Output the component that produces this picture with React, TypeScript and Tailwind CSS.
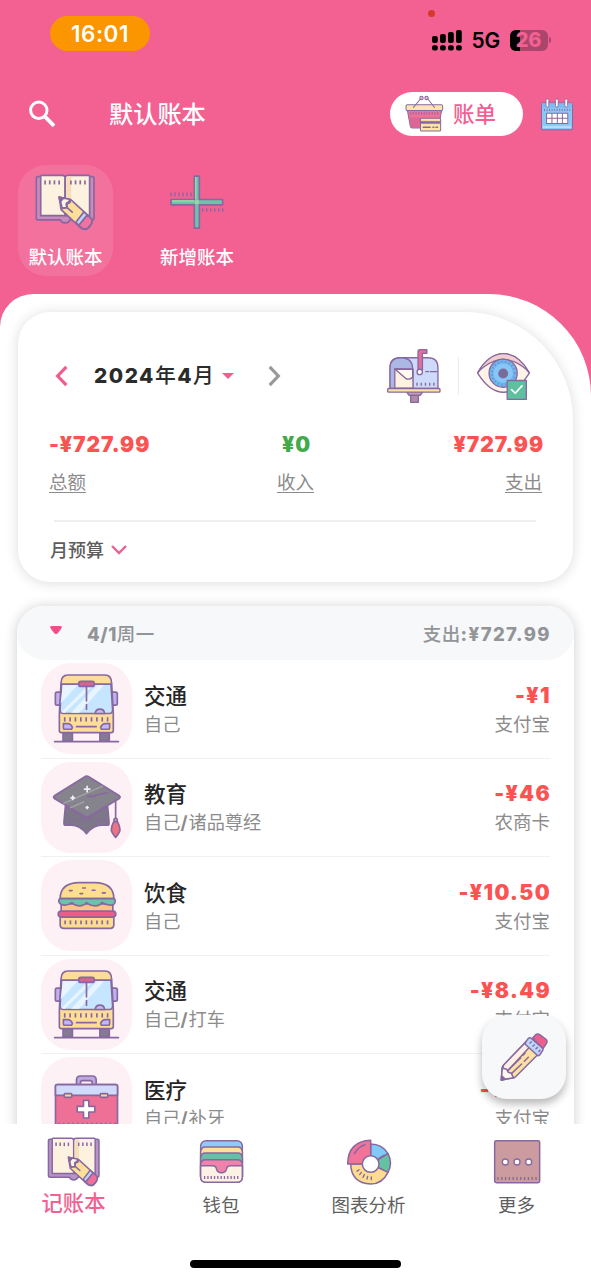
import React from "react";

const P = "#8868a0";

type IconProps = { className?: string };

function Ticks({ x, y, n, gap, len = 12, w = 5, color = P }: { x: number; y: number; n: number; gap: number; len?: number; w?: number; color?: string }) {
  return (
    <g stroke={color} strokeWidth={w} strokeLinecap="butt">
      {Array.from({ length: n }, (_, i) => (
        <path key={i} d={`M${x + i * gap} ${y}v${len}`} />
      ))}
    </g>
  );
}

function BookIcon({ className, eraser = "#ee6f9c", cover = "#b693c6" }: IconProps & { eraser?: string; cover?: string }) {
  return (
    <svg viewBox="104 523 182 170" className={className} fill="none" stroke={P} strokeWidth="5" strokeLinejoin="round" strokeLinecap="round">
      <path d="M121 531h-8q-5 0-5 5v119q0 5 5 5h67q3 9 14 9t14-9h67q5 0 5-5V536q0-5-5-5h-8z" fill={cover} />
      <path d="M121 530q0-3 3-3h62q8 0 8 8v112H121z" fill="#fdf1df" />
      <path d="M267 530q0-3-3-3h-62q-8 0-8 8v112h73z" fill="#fdf1df" />
      <path d="M197 536q0-6 7-6h8v75l-15-12z" fill="#f6deb9" stroke="none" />
      <Ticks x={134} y={542} n={4} gap={14} />
      <Ticks x={211} y={542} n={4} gap={14} />
      <path d="M176 592l34 7 60 55q8 9 0 22l-7 9q-10 7-21 0l-60-56z" fill="#fce09a" />
      <path d="M177 593l29 5 3 10-12 5 2 10-14 2z" fill="#fff5e8" />
      <path d="M176 592l13 3-10 11z" fill={P} />
      <path d="M198 622l17 15M210 602l-12 8 2 12-13 4" />
      <path d="M250 636l-24 31 9 9 25-31z" fill="#b9d5fa" />
      <path d="M260 645l-25 31 7 7q12 8 21 0l8-10q7-11-1-19z" fill={eraser} />
    </svg>
  );
}

function PlusIcon({ className }: IconProps) {
  return (
    <svg viewBox="508 522 168 168" className={className} fill="none" stroke={P} strokeWidth="5" strokeLinejoin="round">
      <path d="M584 527h15v70h70v16h-70v70h-15v-70h-70v-16h70z" fill="#6bc5ad" />
      <path d="M586 599h11v11h-11zM517 599h66v5h-66zM586 530h4v66h-4z" fill="#9ad9a5" stroke="none" />
      <Ticks x={514} y={576} n={6} gap={12} len={11} w={4} />
      <Ticks x={609} y={623} n={6} gap={12} len={11} w={4} />
    </svg>
  );
}

function BasketIcon({ className }: IconProps) {
  return (
    <svg viewBox="106 283 116 110" className={className} fill="none" stroke={P} strokeWidth="3" strokeLinejoin="round" strokeLinecap="round">
      <path d="M113 328l9 49q1 4 5 4h74q4 0 5-4l9-49z" fill="#ee7199" />
      <path d="M118 350l5 26q1 4 5 4h24v-30z" fill="#dd6695" stroke="none" />
      <rect x="109" y="312" width="109" height="17" rx="4" fill="#fce5b4" />
      <path d="M131 320l21-25M194 320l-20-25" />
      <circle cx="155" cy="292" r="5" fill="#e9b8c8" />
      <circle cx="170" cy="292" r="5" fill="#e9b8c8" />
      <Ticks x={123} y={334} n={11} gap={8} len={7} w={3} />
      <rect x="152" y="352" width="60" height="38" rx="3" fill="#fce5a2" />
      <path d="M153 361h58v7h-58z" fill={P} strokeWidth="1" />
      <path d="M160 379h21M189 379h3M198 379h5" strokeWidth="4" />
    </svg>
  );
}

function CalendarIcon({ className }: IconProps) {
  return (
    <svg viewBox="511 291 100 98" className={className} fill="none" stroke={P} strokeWidth="3" strokeLinejoin="round">
      <rect x="515" y="306" width="92" height="79" rx="4" fill="#8dc8f4" />
      <path d="M516 307h90v13h-90z" fill="#7ebcf0" stroke="none" />
      <path d="M519 377h84" stroke="#b5defa" strokeWidth="6" />
      <Ticks x={524} y={323} n={11} gap={7.5} len={7} w={2.5} />
      {[532, 560, 588].map((x) => (
        <rect key={x} x={x - 3.5} y="294" width="8" height="24" rx="4" fill="#fff" strokeWidth="2.5" />
      ))}
      <rect x="530" y="336" width="63" height="31" fill="#fff" />
      <path d="M546 336v31M562 336v31M577 336v31M530 351h63" />
    </svg>
  );
}

function MailboxIcon({ className }: IconProps) {
  return (
    <svg viewBox="168 203 166 166" className={className} fill="none" stroke={P} strokeWidth="4" strokeLinejoin="round" strokeLinecap="round">
      <path d="M241 333h23v31h-23z" fill="#b18aa5" />
      <path d="M229 333h48l-7 10h-34z" fill="#c7a0b4" />
      <path d="M210 232h83q29 0 29 30v61H180v-61q0-30 30-30z" fill="#cddaf9" />
      <path d="M180 323v-61q0-30 32-30 35 0 35 34v57z" fill="#abb8e5" />
      <path d="M194 264l54 2v56h-54z" fill="#fef1df" />
      <path d="M195 266l31 27q9 6 21-3v-24z" fill="#fff9f0" />
      <rect x="173" y="323" width="155" height="11" rx="3" fill="#fce3aa" />
      <path d="M263 268v-55q0-5 5-5h21v11h-13v49z" fill="#e56d9b" />
      <circle cx="268" cy="274" r="8" fill="#fff" />
      <path d="M286 273h9M300 273h19" />
      <Ticks x={260} y={306} n={5} gap={12.5} len={9} w={4} />
    </svg>
  );
}

function EyeIcon({ className }: IconProps) {
  return (
    <svg viewBox="440 215 164 146" className={className} fill="none" stroke={P} strokeWidth="4" strokeLinejoin="round" strokeLinecap="round">
      <path d="M445 278q35-58 77-58t77 58q-35 57-77 57t-77-57z" fill="#fef3e6" />
      <path d="M445 276q33-56 77-56t77 56q-6-8-20-18-30-21-57-21t-57 21q-14 10-20 18z" fill="#f2cfcf" />
      <circle cx="521" cy="278" r="42" fill="#6db7f0" />
      <circle cx="521" cy="278" r="29" fill="#86c7f8" stroke="none" />
      <circle cx="521" cy="278" r="34" strokeDasharray="3 8" strokeWidth="6" strokeLinecap="butt" opacity=".7" />
      <circle cx="521" cy="279" r="13" fill="#746d98" />
      <rect x="533" y="300" width="57" height="56" fill="#5fc0a0" />
      <path d="M546 327l11 11 20-22" stroke="#fff" strokeWidth="5" />
    </svg>
  );
}

function BusIcon({ className }: IconProps) {
  return (
    <svg viewBox="160 235 200 212" className={className} fill="none" stroke={P} strokeWidth="5" strokeLinejoin="round" strokeLinecap="round">
      <path d="M190 413h28v25h-28zM300 413h28v25h-28z" fill="#857b91" />
      <rect x="167" y="292" width="18" height="39" rx="5" fill="#c0b2ec" />
      <rect x="334" y="292" width="18" height="39" rx="5" fill="#c0b2ec" />
      <path d="M205 241h110q20 0 20 25l5 90v51q0 6-6 6H185q-6 0-6-6v-51l5-90q0-25 21-25z" fill="#fddd98" />
      <path d="M186 268h147l5 77q0 11-10 11H191q-10 0-10-11z" fill="#c6e6ff" />
      <path d="M189 271h45l-51 54zM184 352l83-81h14l-85 83zM214 354l78-83h21l-75 83z" fill="#e8f5ff" stroke="none" />
      <rect x="237" y="260" width="46" height="15" rx="6" fill="#d9658f" />
      <path d="M260 275v43M260 329v14M165 440h190M230 395h59" />
      <path d="M286 356q1-13 14-13t14 13z" fill="#c3bdf0" />
      <Ticks x={195} y={367} n={9} gap={16} len={13} w={5} />
      <path d="M191 386h12q11 0 15 12l-3 5h-20q-4 0-4-4zM329 386h-12q-11 0-15 12l3 5h20q4 0 4-4z" fill="#c1b9f3" />
    </svg>
  );
}

function CapIcon({ className }: IconProps) {
  return (
    <svg viewBox="153 538 212 194" className={className} fill="none" stroke={P} strokeWidth="5" strokeLinejoin="round" strokeLinecap="round">
      <path d="M196 634l-4 44q-1 13 2 13h20q24 0 45 25 21-25 45-25h20q3 0 2-13l-4-44-63 34z" fill="#7d7887" />
      <Ticks x={208} y={668} n={10} gap={12} len={12} w={4} />
      <path d="M259 544q4 0 8 3l90 56q5 4 0 8l-91 54q-6 4-12 0l-91-54q-5-4 0-8l90-56q3-3 6-3z" fill="#85848d" />
      <path d="M191 626l116-52M211 639l40-18" stroke="#a3a2a7" strokeWidth="4" />
      <path d="M261 605h23M283 602l39-8M346 619v50" />
      <path d="M261 575v16M253 583h16M218 604v10M213 609h10M261 635v6M258 638h6" stroke="#f0edf4" />
      <circle cx="346" cy="675" r="5" fill="#c9a2c3" />
      <path d="M340 681h12q7 14 7 24-1 9-13 22-12-13-13-22 0-10 7-24z" fill="#ed7283" />
    </svg>
  );
}

function BurgerIcon({ className }: IconProps) {
  return (
    <svg viewBox="167 93 186 148" className={className} fill="none" stroke={P} strokeWidth="5" strokeLinejoin="round" strokeLinecap="round">
      <path d="M179 201h162v25q0 10-11 10H190q-11 0-11-10z" fill="#fddc92" />
      <path d="M182 162h156v24H182z" fill="#fdc18e" />
      <rect x="173" y="184" width="174" height="18" rx="9" fill="#e75f8a" />
      <path d="M179 146q0-47 58-48h46q58 1 58 48z" fill="#fdde91" />
      <path d="M180 146h160q6 0 5 10-2 10-14 10-15 0-26-8-6 10-20 10-17 0-26-10-8 10-23 10-13 0-22-10-11 9-23 8-13-1-16-10-1-10 5-10z" fill="#6bc4aa" />
      <path d="M207 122h8M239 131h8M247 114h8M276 121h8M307 129h8" />
      <Ticks x={194} y={212} n={9} gap={16} len={12} w={5} />
    </svg>
  );
}

function KitIcon({ className }: IconProps) {
  return (
    <svg viewBox="160 672 200 180" className={className} fill="none" stroke={P} strokeWidth="5" strokeLinejoin="round" strokeLinecap="round">
      <path d="M230 705v-15q0-12 12-12h35q12 0 12 12v15h-12v-8q0-5-6-5h-23q-6 0-6 5v8z" fill="#bda9dd" />
      <rect x="167" y="704" width="186" height="142" rx="5" fill="#ef7096" />
      <path d="M172 704h176q5 0 5 5v27H167v-27q0-5 5-5z" fill="#cfdbf8" />
      <rect x="193" y="731" width="23" height="11" rx="3" fill="#fbd780" />
      <rect x="301" y="731" width="23" height="11" rx="3" fill="#fbd780" />
      <path d="M251 751h16v18h18v17h-18v18h-16v-18h-19v-17h19z" fill="#fff" />
      <Ticks x={178} y={818} n={13} gap={14} len={12} />
    </svg>
  );
}

function PencilIcon({ className }: IconProps) {
  return (
    <svg viewBox="72 82 150 150" className={className} fill="none" stroke={P} strokeWidth="4.5" strokeLinejoin="round" strokeLinecap="round">
      <path d="M152 112l39 35-70 70q-3 3-8 3l-34 6 2-34q0-5 3-9z" fill="#fde1a3" />
      <path d="M152 113l14 12-68 73-15-7 3-10z" fill="#fff0e5" />
      <path d="M82 190l13 4 5 9 9 3 6 13-36 7z" fill="#fff8ee" />
      <path d="M79 226l1-13 11 11z" fill={P} />
      <path d="M150 146l-6 6M137 160l-37 36M160 158l-12 12M140 178l-30 28" />
      <path d="M173 100l8-9q6-5 13-1l18 13q7 6 2 14l-10 15z" fill="#ed5f8f" />
      <path d="M160 101q5-4 9 0l33 29q4 4 1 8l-9 13q-4 4-8 0l-33-30q-5-4-1-9z" fill="#bdd4fb" />
      <path d="M165 115l4-3M174 124l4-3M183 132l4-3M192 140l3-3" />
    </svg>
  );
}

function WalletIcon({ className }: IconProps) {
  return (
    <svg viewBox="597 68 136 136" className={className} fill="none" stroke={P} strokeWidth="4.5" strokeLinejoin="round">
      <rect x="602" y="73" width="126" height="126" rx="16" fill="#94c8f8" />
      <path d="M602 107q1-15 14-15h98q13 0 14 15v75H602z" fill="#fddfa0" />
      <path d="M602 125q1-15 14-15h98q13 0 14 15v57H602z" fill="#69bea5" />
      <path d="M602 146q1-15 14-15h98q13 0 14 15v36H602z" fill="#f281ab" />
      <path d="M602 149h37q8 0 10 7 3 14 16 14t16-14q2-7 10-7h37v34q0 16-16 16h-94q-16 0-16-16z" fill="#fdf1e3" />
      <Ticks x={614} y={180} n={11} gap={10} len={9} w={4} />
    </svg>
  );
}

function ChartIcon({ className }: IconProps) {
  return (
    <svg viewBox="137 68 138 138" className={className} fill="none" stroke={P} strokeWidth="4.5" strokeLinejoin="round" strokeLinecap="round">
      <path d="M211 143V83q34 0 52 29z" fill="#7fcaf9" />
      <path d="M211 143l52-31q15 28 0 56z" fill="#64c1a1" />
      <path d="M211 143l52 25q-17 35-52 35-58-2-60-60z" fill="#fddc90" />
      <path d="M211 143h-69q1-68 69-71z" fill="#f27399" />
      <path d="M162 112q12-21 32-27M238 125l13-8" />
      <circle cx="211" cy="143" r="25" fill="#fff" />
      <g strokeWidth="4">
        <path d="M170 165l6-5M178 175l5-7M188 183l4-8M200 188l2-8M213 190v-8" />
      </g>
    </svg>
  );
}

function MoreIcon({ className }: IconProps) {
  return (
    <svg viewBox="579 69 144 135" className={className} fill="none" stroke={P} strokeWidth="4.5">
      <rect x="584" y="74" width="135" height="126" rx="5" fill="#cb9b9f" />
      {[616, 651, 686].map((x) => (
        <circle key={x} cx={x} cy="138" r="9" fill="#fff" strokeWidth="4" />
      ))}
      <Ticks x={594} y={183} n={11} gap={11.4} len={9} w={4} />
    </svg>
  );
}

function Chevron({ className, d }: { className: string; d: string }) {
  return (
    <svg viewBox="0 0 24 24" className={className} fill="none" stroke="currentColor" strokeWidth="3">
      <path d={d} />
    </svg>
  );
}

const rows = [
  { icon: <BusIcon className="h-[71px] w-[67px]" />, name: "交通", note: ["自己"], amount: "-¥1", account: "支付宝" },
  { icon: <CapIcon className="mt-[-1px] h-[65px] w-[71px]" />, name: "教育", note: ["自己", "诸品尊经"], amount: "-¥46", account: "农商卡" },
  { icon: <BurgerIcon className="h-[49px] w-[62px]" />, name: "饮食", note: ["自己"], amount: "-¥10.50", account: "支付宝" },
  { icon: <BusIcon className="h-[71px] w-[67px]" />, name: "交通", note: ["自己", "打车"], amount: "-¥8.49", account: "支付宝" },
  { icon: <KitIcon className="mt-[3px] h-[60px] w-[67px]" />, name: "医疗", note: ["自己", "补牙"], amount: "-¥662", account: "支付宝" },
];

function StatusBar() {
  return (
    <div className="flex h-[68px] shrink-0 justify-between pl-[50px] pr-[40px] pt-4">
      <div className="flex h-[35px] w-[100px] items-center justify-center rounded-full bg-[#fb9500] pt-[2px] text-[22.5px] font-semibold leading-none tracking-[0.5px] text-white">16:01</div>
      <div className="relative flex h-[26px] items-center pt-[22px]">
        <i className="absolute left-[-4px] top-[-6px] size-[7px] rounded-full bg-[#d43a27]" />
        <svg viewBox="0 0 31 21" className="h-[21px] w-[31px]">
          {[0, 1, 2, 3].map((i) => (
            <g key={i}>
              <rect x={i * 8} y={6 - i * 2} width="5.8" height={7 + i * 2} rx="2" />
              <rect x={i * 8} y="15.2" width="5.8" height="5.3" rx="2" />
            </g>
          ))}
        </svg>
        <span className="ml-[9px] w-[29px] text-[21px] font-semibold leading-none tracking-[-0.2px] text-black">5G</span>
        <div className="relative ml-[9px] flex h-[21px] w-[38px] items-center justify-center overflow-hidden rounded-[6px] bg-[#ac456c]">
          <i className="absolute inset-y-0 left-0 w-[10px] bg-black" />
          <span className="relative text-[20px] font-extrabold leading-none tracking-[-0.3px] text-[#f26192]">26</span>
        </div>
        <i className="ml-[1.5px] h-[6px] w-[2px] rounded-r-full bg-[#ac456c]" />
      </div>
    </div>
  );
}

export default function App() {
  return (
    <div className="relative flex h-[1280px] w-full flex-col overflow-hidden bg-[#f26192] font-['Inter','Noto_Sans_CJK_SC',sans-serif] text-[#2b2b2b]">
      <StatusBar />

      <header className="flex h-[92px] shrink-0 items-center pl-[28px] pr-[17px] text-white">
        <svg viewBox="0 0 28 28" className="size-[28px]" fill="none" stroke="currentColor" strokeWidth="3">
          <circle cx="10.8" cy="10.3" r="8.2" />
          <path d="M16.5 16.2L26 25.8" strokeWidth="3.8" />
        </svg>
        <h1 className="ml-[53px] flex-1 pt-[2px] text-[24.2px] font-medium leading-none">默认账本</h1>
        <button className="flex h-[44px] w-[133px] items-center rounded-full bg-white pl-[15px] text-[21.5px] font-medium leading-none text-[#f26192]">
          <BasketIcon className="mr-[9px] mt-[-2px] h-[37px] w-[39px]" />
          <span className="pt-px">账单</span>
        </button>
        <CalendarIcon className="ml-[17px] h-[33px] w-[34px]" />
      </header>

      <div className="flex h-[134px] shrink-0 gap-[37px] pl-[18px] pt-[5px] text-[18.5px] font-medium leading-none text-white">
        <div className="flex h-[111px] w-[95px] flex-col items-center rounded-[28px] bg-white/10 pt-[9px]">
          <BookIcon className="h-[57px] w-[61px]" eraser="#f2729f" cover="#c98bbb" />
          <span className="mt-[17px] whitespace-nowrap">默认账本</span>
        </div>
        <div className="flex h-[111px] w-[94px] flex-col items-center pt-[9px]">
          <PlusIcon className="h-[57px] w-[56px]" />
          <span className="mt-[17px] whitespace-nowrap">新增账本</span>
        </div>
      </div>

      <main className="flex h-[830px] shrink-0 flex-col overflow-hidden rounded-tl-[33px] rounded-tr-[102px] bg-white pt-[18px]">
        <section className="mx-[18px] h-[270px] shrink-0 rounded-[32px] rounded-tr-[108px] bg-white pt-[34px] shadow-[0_1px_13px_rgba(0,0,0,0.14)]">
          <div className="flex h-[60px] items-center pl-[31px] pr-[42px]">
            <Chevron className="size-[26px] text-[#ee5f90]" d="M16 3.5L8 12l8 8.5" />
            <span className="ml-[19px] w-[122px] whitespace-nowrap text-[20.8px] font-extrabold leading-none tracking-[1.5px]">2024<span className="font-medium">年</span>4<span className="font-medium">月</span></span>
            <svg viewBox="0 0 12 6" className="ml-[6px] h-[6px] w-[12px] fill-[#ee5f90]"><path d="M0 0h12L6 6z" /></svg>
            <Chevron className="ml-[27px] size-[26px] text-[#999]" d="M8 3.5L16 12l-8 8.5" />
            <div className="flex flex-1 items-center justify-end">
              <MailboxIcon className="size-[56px]" />
              <i className="ml-[16px] h-[38px] w-px bg-[#ececec]" />
              <EyeIcon className="ml-[17px] h-[49px] w-[55px]" />
            </div>
          </div>
          <div className="mt-[26px] grid grid-cols-3 pl-[31px] pr-[29px] text-[21px] font-black leading-[26px] tracking-[0.9px]">
            <div className="text-[#fb5252]">-¥727.99</div>
            <div className="text-center text-[#43aa4b]">¥0</div>
            <div className="text-right text-[#fb5252]">¥727.99</div>
          </div>
          <div className="mt-[11px] flex justify-between px-[31px] text-[18.5px] leading-[26px] text-[#8c8c8c] underline decoration-1 underline-offset-[3px]">
            <span>总额</span>
            <span>收入</span>
            <span>支出</span>
          </div>
          <div className="ml-[36px] mr-[37px] mt-[25px] h-[2px] bg-[#efefef]" />
          <div className="mt-[15px] flex h-[26px] items-center pl-[32px] text-[18px] font-medium leading-none text-[#5c5c5c]">
            <span className="pt-px">月预算</span>
            <svg viewBox="0 0 16 10" className="ml-[7px] h-[10px] w-[16px]" fill="none" stroke="#ee5f90" strokeWidth="2.4"><path d="M1 1l7 7 7-7" /></svg>
          </div>
        </section>

        <section className="mx-[17px] mt-[24px] flex shrink-0 flex-col rounded-[27px] bg-white shadow-[0_1px_13px_rgba(0,0,0,0.20)]">
          <div className="flex h-[54px] items-center rounded-[27px] bg-[#f6f8fa] pl-[33px] pr-[23px] text-[18.5px] font-extrabold leading-none text-[#929497]">
            <svg viewBox="0 0 12 8" className="mt-[-7px] h-[8px] w-[12px] fill-[#ee5085]"><path d="M2 0h8q3 0 1 3L7.5 7.5Q6 8.5 4.5 7.500L1 3Q-1 0 2 0z" /></svg>
            <span className="ml-[25px] flex-1 pt-[2px] tracking-[0.5px]">4/1<span className="font-medium">周一</span></span>
            <span className="pt-[2px] tracking-[1.4px]"><span className="font-medium tracking-[0.4px]">支出</span>:¥727.99</span>
          </div>
          {rows.map((row, i) => (
            <div key={i} className="ml-[24px] mr-[24px] flex h-[98.5px] shrink-0 items-center border-b border-[#f0f0f0]">
              <div className="flex size-[91px] shrink-0 items-center justify-center rounded-[30px] bg-[#fdf1f5]">{row.icon}</div>
              <div className="ml-[12px] flex-1 pt-[2px]">
                <div className="text-[21.5px] font-medium leading-[28px] text-[#262626]">{row.name}</div>
                <div className="text-[18.2px] leading-[28px] text-[#8c8c8c]">
                  {row.note[0]}
                  {row.note[1] && <span className="font-bold tracking-[1px]">/</span>}
                  {row.note[1]}
                </div>
              </div>
              <div className="pt-[2px] text-right">
                <div className="mr-[-1px] text-[21px] font-black leading-[28px] tracking-[1.4px] text-[#fb5252]">{row.amount}</div>
                <div className="text-[18.5px] leading-[28px] text-[#8c8c8c]">{row.account}</div>
              </div>
            </div>
          ))}
        </section>
      </main>

      <button className="absolute left-[482px] top-[1015px] flex size-[84px] items-center justify-center rounded-[25px] bg-[#f6f8fa] shadow-[0_5px_9px_rgba(0,0,0,0.28)]">
        <PencilIcon className="size-[50px]" />
      </button>

      <nav className="relative flex h-[156px] shrink-0 bg-white text-[18.5px] leading-none text-[#5f5f5f]">
        <div className="flex w-[147px] flex-col items-center pt-[13px]">
          <BookIcon className="h-[50px] w-[54px]" />
          <span className="mt-[6px] text-[21.3px] font-medium text-[#f26192]">记账本</span>
        </div>
        <div className="flex w-[148px] flex-col items-center pt-[15px]">
          <WalletIcon className="size-[45px]" />
          <span className="mt-[12px]">钱包</span>
        </div>
        <div className="flex w-[147px] flex-col items-center pt-[15px]">
          <ChartIcon className="size-[46px]" />
          <span className="mt-[11px]">图表分析</span>
        </div>
        <div className="flex w-[149px] flex-col items-center pt-[15px]">
          <MoreIcon className="h-[45px] w-[48px]" />
          <span className="mt-[12px]">更多</span>
        </div>
        <i className="absolute bottom-[12px] left-[190px] h-[8px] w-[211px] rounded-full bg-black" />
      </nav>
    </div>
  );
}
